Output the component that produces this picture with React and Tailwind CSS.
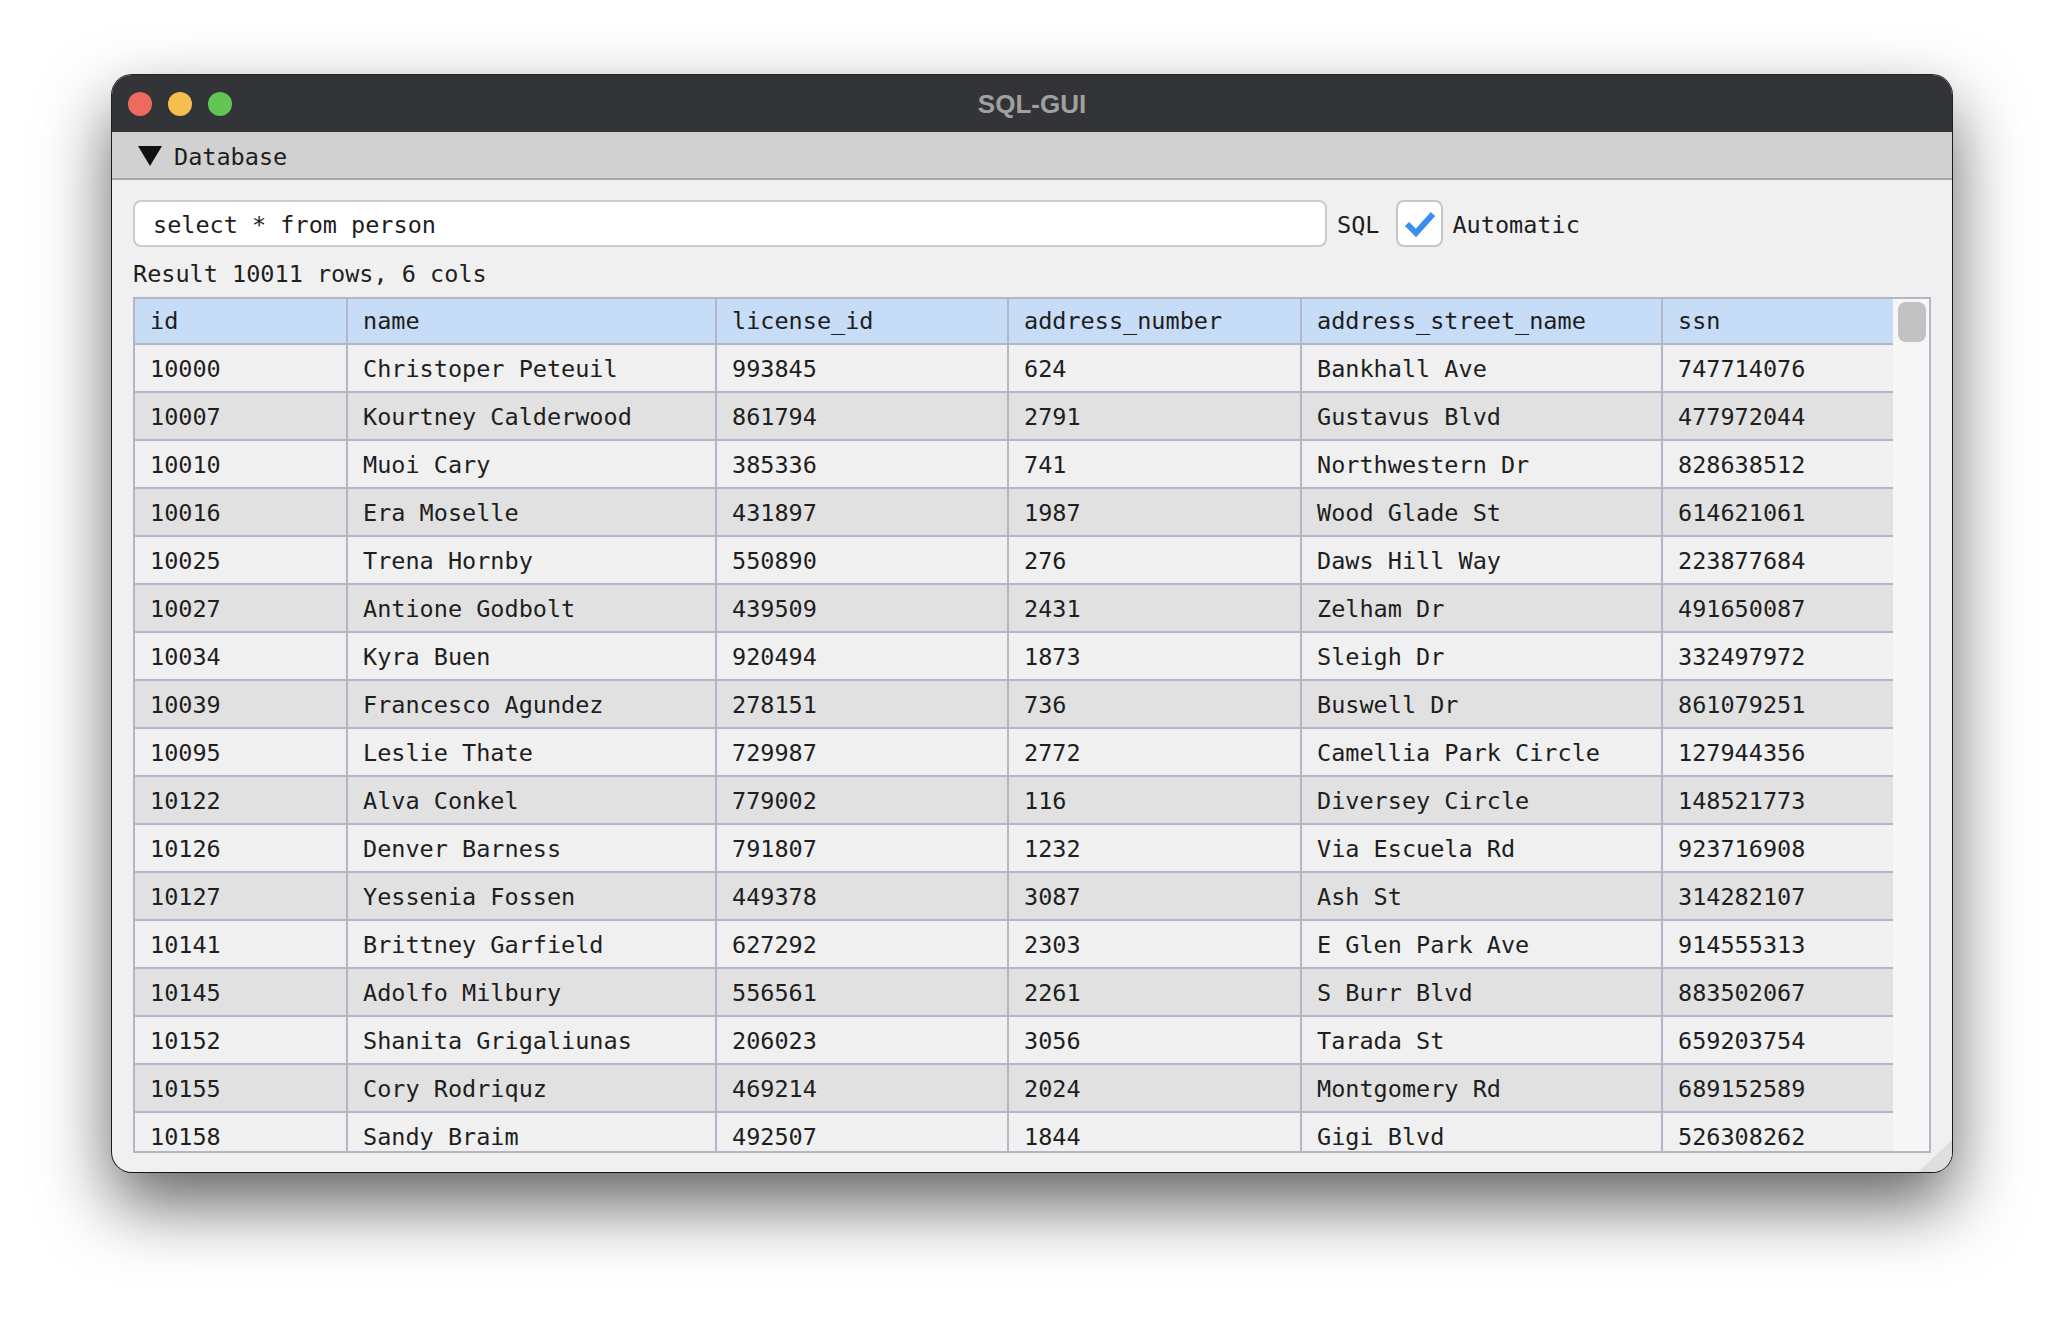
import React from 'react';

const COLUMNS = ['id', 'name', 'license_id', 'address_number', 'address_street_name', 'ssn'];

const ROWS = [
  ['10000', 'Christoper Peteuil', '993845', '624', 'Bankhall Ave', '747714076'],
  ['10007', 'Kourtney Calderwood', '861794', '2791', 'Gustavus Blvd', '477972044'],
  ['10010', 'Muoi Cary', '385336', '741', 'Northwestern Dr', '828638512'],
  ['10016', 'Era Moselle', '431897', '1987', 'Wood Glade St', '614621061'],
  ['10025', 'Trena Hornby', '550890', '276', 'Daws Hill Way', '223877684'],
  ['10027', 'Antione Godbolt', '439509', '2431', 'Zelham Dr', '491650087'],
  ['10034', 'Kyra Buen', '920494', '1873', 'Sleigh Dr', '332497972'],
  ['10039', 'Francesco Agundez', '278151', '736', 'Buswell Dr', '861079251'],
  ['10095', 'Leslie Thate', '729987', '2772', 'Camellia Park Circle', '127944356'],
  ['10122', 'Alva Conkel', '779002', '116', 'Diversey Circle', '148521773'],
  ['10126', 'Denver Barness', '791807', '1232', 'Via Escuela Rd', '923716908'],
  ['10127', 'Yessenia Fossen', '449378', '3087', 'Ash St', '314282107'],
  ['10141', 'Brittney Garfield', '627292', '2303', 'E Glen Park Ave', '914555313'],
  ['10145', 'Adolfo Milbury', '556561', '2261', 'S Burr Blvd', '883502067'],
  ['10152', 'Shanita Grigaliunas', '206023', '3056', 'Tarada St', '659203754'],
  ['10155', 'Cory Rodriquz', '469214', '2024', 'Montgomery Rd', '689152589'],
  ['10158', 'Sandy Braim', '492507', '1844', 'Gigi Blvd', '526308262'],
];

const GRID = 'grid grid-cols-[211px_369px_292px_293px_361px_232px]';

const Cell = ({ index, header, children }) => (
  <div
    className={`${
      index === 0 ? 'pl-[15px]' : 'pl-[15px] border-l-2 border-[#b6b4c8]'
    } ${header ? 'pt-[2px]' : 'pt-[4px]'} flex items-center whitespace-nowrap overflow-hidden`}
  >
    {children}
  </div>
);

const TrafficLights = () => (
  <div className="flex items-center gap-[16px] pl-[16px]">
    <span className="w-[24px] h-[24px] rounded-full bg-[#ee6a5f]" />
    <span className="w-[24px] h-[24px] rounded-full bg-[#f5be4f]" />
    <span className="w-[24px] h-[24px] rounded-full bg-[#62c554]" />
  </div>
);

export default function App() {
  return (
    <div className="min-h-screen bg-white pt-[75px] pl-[112px]">
      <div className="relative w-[1840px] h-[1097px] rounded-[20px] overflow-hidden bg-[#f0f0f0] flex flex-col shadow-[0_0_0_1px_rgba(0,0,0,0.85),0_32px_70px_rgba(0,0,0,0.62)] font-['DejaVu_Sans_Mono',monospace] text-[23.5px] text-[#1e1e1e]">
        {/* Title bar */}
        <div className="h-[57px] bg-[#333437] grid grid-cols-[1fr_auto_1fr] items-center">
          <TrafficLights />
          <div className="font-['Liberation_Sans',Arial,sans-serif] font-bold text-[26px] text-[#a0a0a0] pt-[1px]">
            SQL-GUI
          </div>
          <div />
        </div>

        {/* Collapsible header */}
        <div className="h-[48px] bg-[#d1d1d1] border-b-2 border-[#a9a9a9] flex items-center pl-[26px]">
          <svg width="24" height="20" viewBox="0 0 24 20" className="mt-[2px]">
            <polygon points="0,0 24,0 12,20" fill="#111" />
          </svg>
          <span className="ml-[12px] pt-[5px]">Database</span>
        </div>

        {/* Content */}
        <div className="flex-1 flex flex-col px-[21px] pt-[20px]">
          <div className="flex items-center h-[47px]">
            <div className="w-[1194px] h-[47px] bg-white border-2 border-[#cbcbcb] rounded-[8px] pl-[18px] pt-[4px] flex items-center">
              select * from person
            </div>
            <span className="ml-[10px] pt-[4px]">SQL</span>
            <div className="ml-[17px] w-[47px] h-[47px] bg-white border-2 border-[#c6c6c6] rounded-[8px] flex items-center justify-center">
              <svg width="34" height="28" viewBox="0 0 34 28">
                <polyline points="4,14 13,23 30,4" fill="none" stroke="#3b8ef0" strokeWidth="6" />
              </svg>
            </div>
            <span className="ml-[9px] pt-[4px]">Automatic</span>
          </div>

          <div className="h-[50px] flex items-center pt-[6px]">Result 10011 rows, 6 cols</div>

          {/* Table */}
          <div className="h-[856px] border-2 border-[#b6b4c8] flex overflow-hidden">
            <div className="w-[1758px] flex flex-col overflow-hidden">
              <div className={`${GRID} h-[46px] shrink-0 bg-[#c6dcf7] border-b-2 border-[#b6b4c8]`}>
                {COLUMNS.map((c, i) => (
                  <Cell key={c} index={i} header>{c}</Cell>
                ))}
              </div>
              {ROWS.map((row, r) => (
                <div
                  key={row[0]}
                  className={`${GRID} h-[48px] shrink-0 border-b-2 border-[#b6b4c8] ${r % 2 === 0 ? 'bg-[#f0f0f0]' : 'bg-[#e1e1e1]'}`}
                >
                  {row.map((v, i) => (
                    <Cell key={i} index={i}>{v}</Cell>
                  ))}
                </div>
              ))}
            </div>
            <div className="flex-1 bg-[#f6f6f6] pl-[5px] pr-[3px] pt-[3px]">
              <div className="h-[40px] rounded-[8px] bg-[#c1c1c1]" />
            </div>
          </div>
        </div>

        {/* Resize grip */}
        <svg className="absolute right-0 bottom-0" width="34" height="32" viewBox="0 0 34 32">
          <polygon points="34,0 34,32 0,32" fill="#dedede" />
        </svg>
      </div>
    </div>
  );
}
